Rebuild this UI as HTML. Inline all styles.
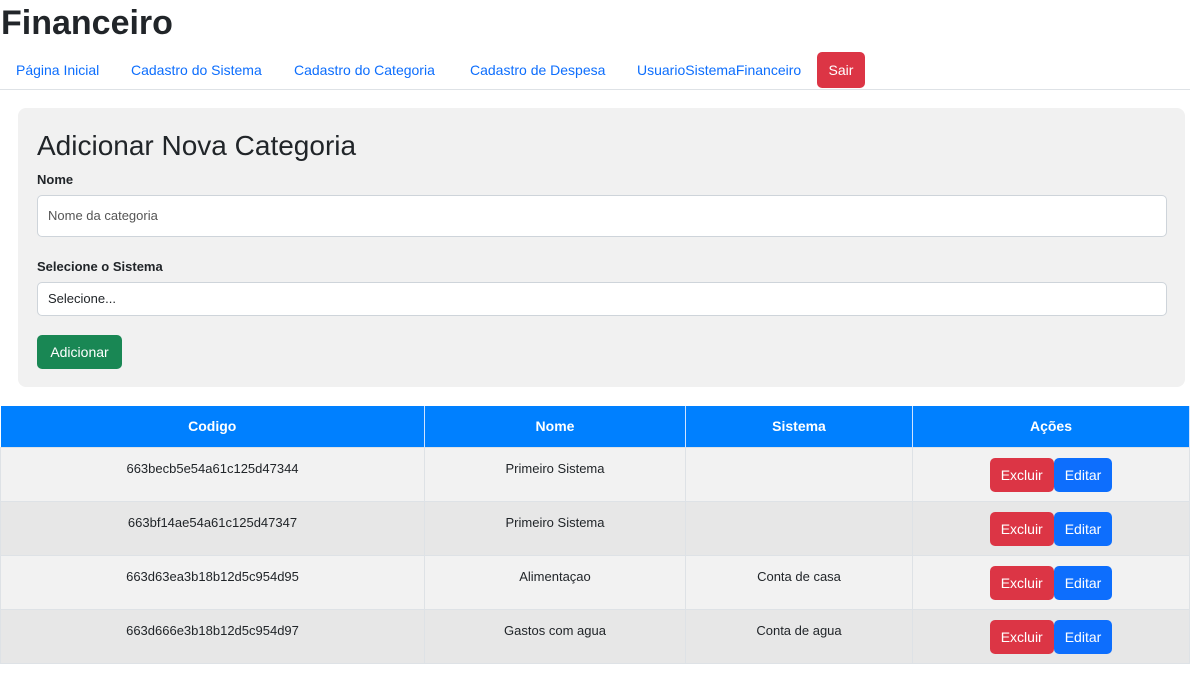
<!DOCTYPE html>
<html><head><meta charset="utf-8"><style>
*{box-sizing:border-box;margin:0;padding:0}
body{width:1190px;height:677px;background:#fff;font-family:"Liberation Sans",sans-serif;color:#212529;position:relative;overflow:hidden}
.a{position:absolute}
h1{position:absolute;left:1px;top:2px;font-size:34px;font-weight:bold;line-height:42px}
.nav a{position:absolute;top:62px;font-size:14px;color:#0d6efd;text-decoration:none}
.sair{position:absolute;left:817px;top:52px;width:48px;height:36px;background:#dc3545;color:#fff;border-radius:5px;font-size:14px;text-align:center;line-height:36px}
.line{left:0;top:89px;width:1190px;height:1px;background:#dee2e6}
.card{left:18px;top:108px;width:1167px;height:279px;background:#f1f1f1;border-radius:8px}
.inp{background:#fff;border:1px solid #ced4da;border-radius:5px;font-size:13px;color:#555;padding-left:10px}
table{position:absolute;left:0;top:406px;width:1190px;border-collapse:collapse;font-size:13px}
th{background:#0080ff;color:#fff;height:41px;font-size:14px;border-right:1px solid #cfe3ff}
td{height:54px;text-align:center;border:1px solid #dee2e6;vertical-align:top;padding-top:13px}
tr.o td{background:#f2f2f2}tr.e td{background:#e7e7e7}
.b{display:inline-block;color:#fff;height:34px;line-height:34px;padding:0 11px;border-radius:5px;font-size:14px;margin-top:-3px}
</style></head><body>
<h1>Financeiro</h1>
<div class="nav"><a style="left:16px">Página Inicial</a><a style="left:131px">Cadastro do Sistema</a><a style="left:294px">Cadastro do Categoria</a><a style="left:470px">Cadastro de Despesa</a><a style="left:637px">UsuarioSistemaFinanceiro</a></div>
<div class="sair">Sair</div>
<div class="a line"></div>
<div class="a card"></div>
<div class="a" style="left:37px;top:128px;font-size:28px;line-height:36px">Adicionar Nova Categoria</div>
<div class="a" style="left:37px;top:172px;font-size:13px;font-weight:bold">Nome</div>
<div class="a inp" style="left:37px;top:195px;width:1130px;height:42px;line-height:40px">Nome da categoria</div>
<div class="a" style="left:37px;top:259px;font-size:13px;font-weight:bold">Selecione o Sistema</div>
<div class="a inp" style="left:37px;top:282px;width:1130px;height:34px;line-height:32px;color:#212529">Selecione...</div>
<div class="a" style="left:37px;top:335px;width:85px;height:34px;background:#198754;color:#fff;border-radius:5px;font-size:14px;line-height:34px;text-align:center">Adicionar</div>
<table>
<tr><th style="width:424px">Codigo</th><th style="width:261px">Nome</th><th style="width:227px">Sistema</th><th>Ações</th></tr>
<tr class="o"><td>663becb5e54a61c125d47344</td><td>Primeiro Sistema</td><td></td><td><span class="b" style="background:#dc3545">Excluir</span><span class="b" style="background:#0d6efd">Editar</span></td></tr>
<tr class="e"><td>663bf14ae54a61c125d47347</td><td>Primeiro Sistema</td><td></td><td><span class="b" style="background:#dc3545">Excluir</span><span class="b" style="background:#0d6efd">Editar</span></td></tr>
<tr class="o"><td>663d63ea3b18b12d5c954d95</td><td>Alimentaçao</td><td>Conta de casa</td><td><span class="b" style="background:#dc3545">Excluir</span><span class="b" style="background:#0d6efd">Editar</span></td></tr>
<tr class="e"><td>663d666e3b18b12d5c954d97</td><td>Gastos com agua</td><td>Conta de agua</td><td><span class="b" style="background:#dc3545">Excluir</span><span class="b" style="background:#0d6efd">Editar</span></td></tr>
</table>
</body></html>
